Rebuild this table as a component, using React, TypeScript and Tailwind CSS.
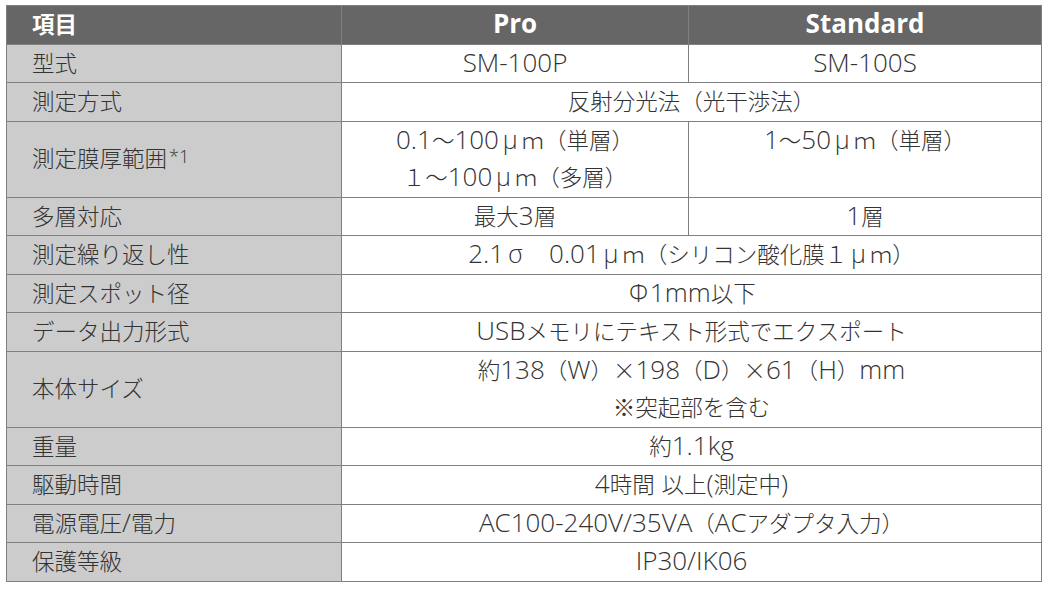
import React from "react";

// Latin runs are set larger than the Japanese ones, like the source's Meiryo mix
const T = ({ s }: { s: string }) => {
  const parts = s.match(/[\x20-\x7E]+|[μσΦ]|[^\x20-\x7EμσΦ]+/g) ?? [];
  return (
    <>
      {parts.map((p, i) =>
        /^[\x20-\x7E]+$/.test(p) ? (
          <span key={i} className="text-[26px] leading-none">
            {p}
          </span>
        ) : /^[μσΦ]$/.test(p) ? (
          <span key={i} className="inline-block w-[22.5px] text-center text-[25px] leading-none">
            {p}
          </span>
        ) : (
          <span key={i} className="font-['Noto_Sans_CJK_JP'] leading-none">
            {p}
          </span>
        )
      )}
    </>
  );
};

type Row = { label: React.ReactNode; pro: string[]; std?: string };

const rows: Row[] = [
  { label: <T s="型式" />, pro: ["SM-100P"], std: "SM-100S" },
  { label: <T s="測定方式" />, pro: ["反射分光法（光干渉法）"] },
  {
    label: (
      <>
        <T s="測定膜厚範囲" />
        <sup className="relative -top-[4px] ml-[2px] text-[18px]">*1</sup>
      </>
    ),
    pro: ["0.1～100μｍ（単層）", "１～100μｍ（多層）"],
    std: "1～50μｍ（単層）",
  },
  { label: <T s="多層対応" />, pro: ["最大3層"], std: "1層" },
  { label: <T s="測定繰り返し性" />, pro: ["2.1σ　0.01μｍ（シリコン酸化膜１μｍ）"] },
  { label: <T s="測定スポット径" />, pro: ["Φ1mm以下"] },
  { label: <T s="データ出力形式" />, pro: ["USBメモリにテキスト形式でエクスポート"] },
  { label: <T s="本体サイズ" />, pro: ["約138（W）×198（D）×61（H）mm", "※突起部を含む"] },
  { label: <T s="重量" />, pro: ["約1.1kg"] },
  { label: <T s="駆動時間" />, pro: ["4時間 以上(測定中)"] },
  { label: <T s="電源電圧/電力" />, pro: ["AC100-240V/35VA（ACアダプタ入力）"] },
  { label: <T s="保護等級" />, pro: ["IP30/IK06"] },
];

const Lines = ({ lines }: { lines: string[] }) => (
  <>
    {lines.map((l, i) => (
      <div key={i}>
        <T s={l} />
      </div>
    ))}
  </>
);

export default function App() {
  return (
    <div
      className="h-[590px] w-[1050px] bg-white pl-[6px] pt-[5px]"
      style={{ fontFamily: '"Open Sans", "Noto Sans CJK JP", sans-serif' }}
    >
      <table className="w-[1035px] table-fixed border-collapse text-[22.5px] leading-[37.5px] text-[#333]">
        <colgroup>
          <col className="w-[335px]" />
          <col className="w-[347px]" />
          <col className="w-[353px]" />
        </colgroup>
        <thead>
          <tr className="bg-[#666] font-bold text-white">
            <th className="border border-[#808080] px-[25px] text-left">
              <T s="項目" />
            </th>
            <th className="border border-[#808080] text-center">
              <T s="Pro" />
            </th>
            <th className="border border-[#808080] text-center">
              <T s="Standard" />
            </th>
          </tr>
        </thead>
        <tbody className="font-light">
          {rows.map((r, i) => (
            <tr key={i}>
              <td className="border border-[#808080] bg-[#ccc] px-[25px] align-middle">{r.label}</td>
              {r.std === undefined ? (
                <td colSpan={2} className="border border-[#808080] text-center align-top">
                  <Lines lines={r.pro} />
                </td>
              ) : (
                <>
                  <td className="border border-[#808080] text-center align-top">
                    <Lines lines={r.pro} />
                  </td>
                  <td className="border border-[#808080] text-center align-top">
                    <Lines lines={[r.std]} />
                  </td>
                </>
              )}
            </tr>
          ))}
        </tbody>
      </table>
    </div>
  );
}
